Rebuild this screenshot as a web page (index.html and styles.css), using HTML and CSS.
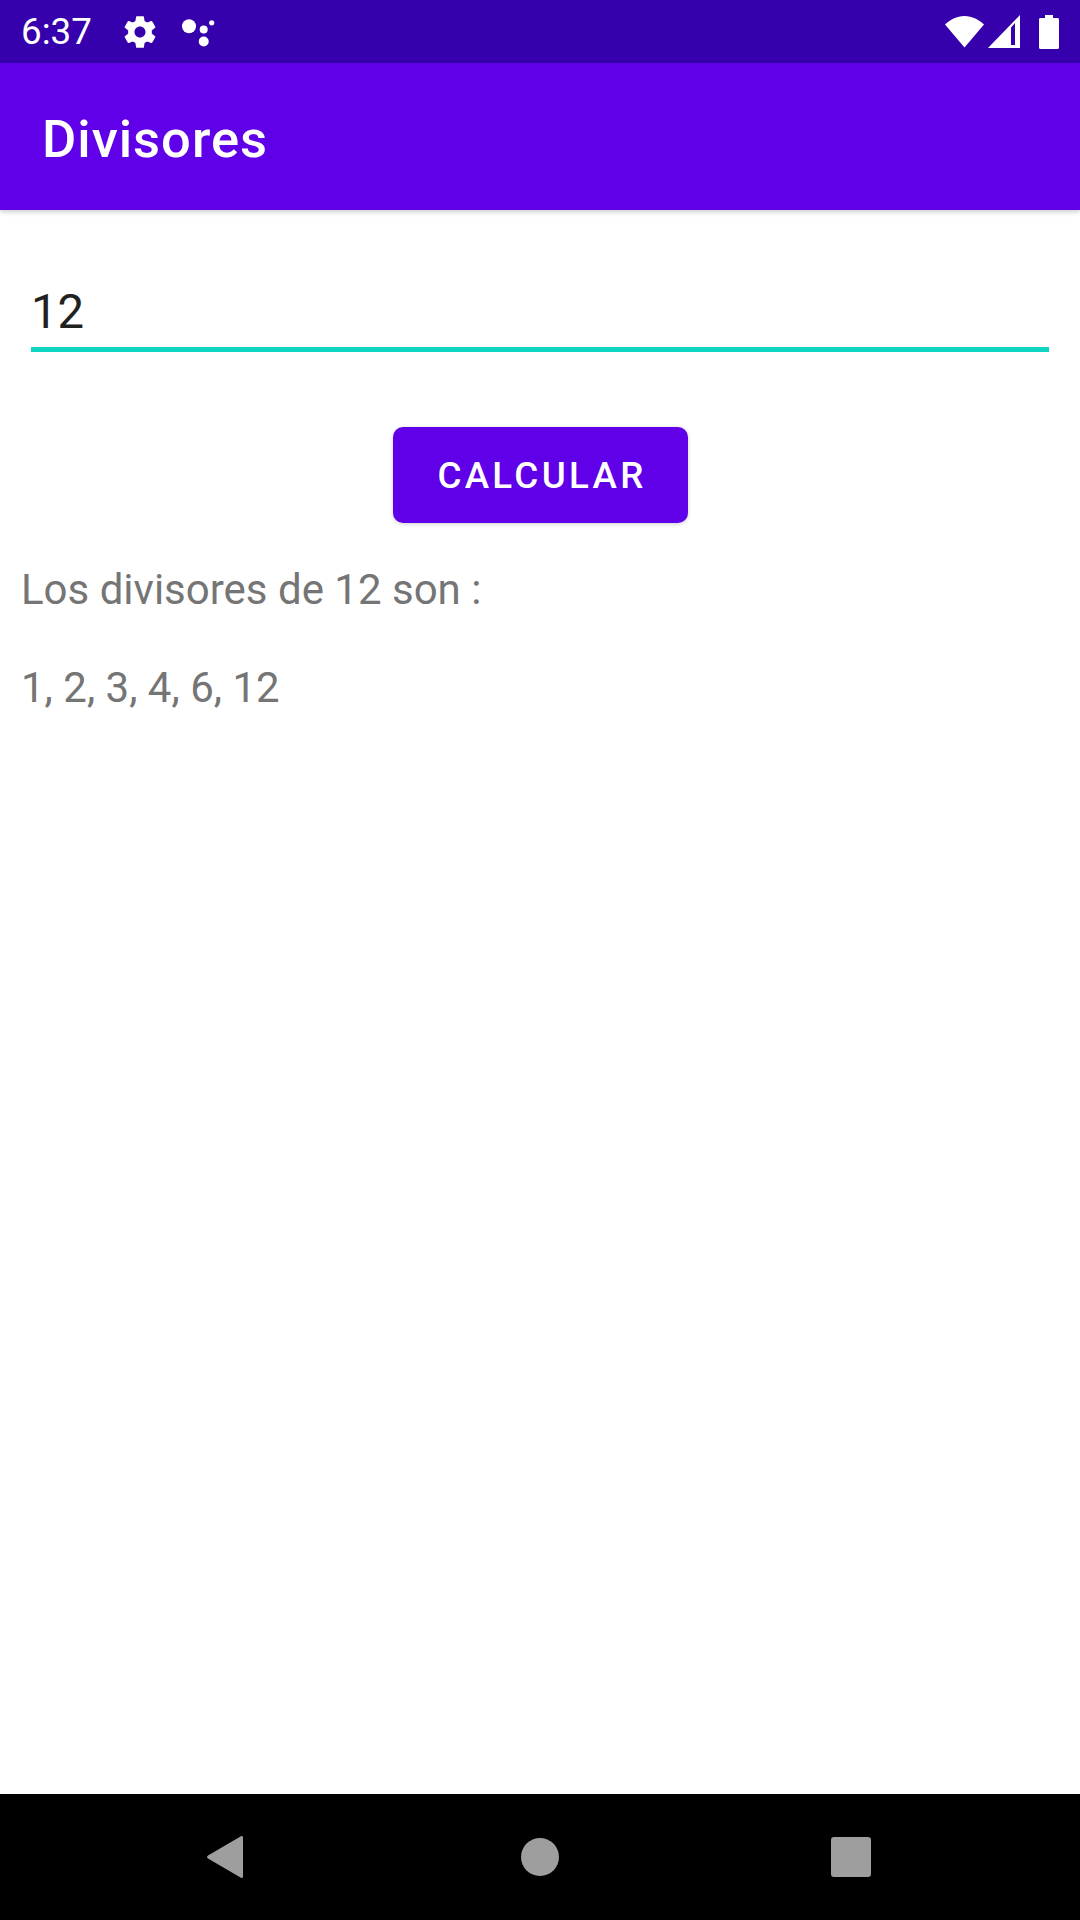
FILE: index.html
```html
<!DOCTYPE html>
<html lang="es">
<head>
    <meta charset="UTF-8">
    <meta name="viewport" content="width=device-width, initial-scale=1.0">
    <title>Divisores</title>
    <link rel="stylesheet" href="styles.css">
</head>
<body>

    <!-- Barra de estado -->
    <div class="status-bar">
        <span class="status-time">6:37</span>
        <svg class="icon-gear" viewBox="0 0 24 24" width="38" height="38">
            <path fill="#fff" fill-rule="evenodd" d="M19.43 12.98c.04-.32.07-.64.07-.98s-.03-.66-.07-.98l2.11-1.65c.19-.15.24-.42.12-.64l-2-3.46c-.12-.22-.39-.3-.61-.22l-2.49 1c-.52-.4-1.08-.73-1.69-.98l-.38-2.65C14.46 2.18 14.25 2 14 2h-4c-.25 0-.46.18-.49.42l-.38 2.65c-.61.25-1.17.59-1.69.98l-2.49-1c-.23-.09-.49 0-.61.22l-2 3.46c-.13.22-.07.49.12.64l2.11 1.65c-.04.32-.07.65-.07.98s.03.66.07.98l-2.11 1.65c-.19.15-.24.42-.12.64l2 3.46c.12.22.39.3.61.22l2.49-1c.52.4 1.08.73 1.69.98l.38 2.65c.03.24.24.42.49.42h4c.25 0 .46-.18.49-.42l.38-2.65c.61-.25 1.17-.59 1.69-.98l2.49 1c.23.09.49 0 .61-.22l2-3.46c.12-.22.07-.49-.12-.64l-2.11-1.65zM12 15.500c-1.930 0-3.500-1.570-3.500-3.500s1.570-3.500 3.500-3.500 3.500 1.570 3.500 3.500-1.570 3.500-3.500 3.500z"/>
        </svg>
        <svg class="icon-dots" viewBox="0 0 44 36" width="44" height="36">
            <circle cx="13" cy="12.200" r="7" fill="#fff"/>
            <circle cx="27.700" cy="15.500" r="4" fill="#fff"/>
            <circle cx="35.700" cy="8.800" r="2.600" fill="#fff"/>
            <circle cx="27.700" cy="27.500" r="5" fill="#fff"/>
        </svg>
        <div class="status-right">
            <svg viewBox="0 0 39 32" width="39" height="32">
                <path fill="#fff" d="M19.500 31.500 0 8.600C5 3.600 11.800 0 19.500 0S34 3.600 39 8.600z"/>
            </svg>
            <svg class="icon-signal" viewBox="0 0 32 33" width="32" height="33">
                <path fill="#fff" fill-rule="evenodd" d="M32 0v33H0zM27 8l-4 4.500V30h4z"/>
            </svg>
            <svg class="icon-battery" viewBox="0 0 20 34" width="20" height="34">
                <path fill="#fff" d="M6 0h8v3h4.500c.9 0 1.500.6 1.500 1.500V32.500c0 .9-.6 1.500-1.500 1.500H1.500C.6 34 0 33.400 0 32.500V4.500C0 3.600.6 3 1.500 3H6z"/>
            </svg>
        </div>
    </div>

    <!-- Barra de la app -->
    <header class="app-bar">
        <h1 class="app-title">Divisores</h1>
    </header>

    <main class="content">
        <div class="number-field">12</div>
        <div class="button-row">
            <button class="calc-button" type="button">CALCULAR</button>
        </div>
        <p class="result-text result-title">Los divisores de 12 son :</p>
        <p class="result-text result-list">1, 2, 3, 4, 6, 12</p>
    </main>

    <!-- Barra de navegacion -->
    <nav class="nav-bar">
        <svg viewBox="0 0 36 42" width="36" height="42">
            <path fill="#9e9e9e" d="M33.500 .4C34.800-.5 36 .2 36 1.800v38.400c0 1.600-1.200 2.300-2.500 1.400L1 22.600c-1.300-.9-1.300-2.300 0-3.200z"/>
        </svg>
        <div class="nav-circle"></div>
        <div class="nav-square"></div>
    </nav>

</body>
</html>
```

FILE: styles.css
```css
* {
    box-sizing: border-box;
}

body {
    margin: 0;
    width: 1080px;
    height: 1920px;
    display: flex;
    flex-direction: column;
    font-family: Roboto, "Liberation Sans", sans-serif;
    background-color: #fff;
    overflow: hidden;
}

/* Barra de estado */
.status-bar {
    height: 63px;
    background-color: #3600ac;
    color: #fff;
    display: flex;
    align-items: center;
    padding: 0 21px;
}

.status-time {
    font-size: 36.750px;
    width: 100px;
}

.icon-gear {
    margin-right: 17px;
}

.status-right {
    margin-left: auto;
    display: flex;
    align-items: center;
}

.icon-signal {
    margin-left: 4px;
}

.icon-battery {
    margin-left: 19px;
}

/* Barra de la app */
.app-bar {
    height: 147px;
    background-color: #5f00e8;
    display: flex;
    align-items: center;
    padding: 4px 0 0 42px;
    box-shadow: 0 2px 5px rgba(0, 0, 0, 0.2);
}

.app-title {
    margin: 0;
    color: #fff;
    font-size: 52.500px;
    font-weight: 500;
    letter-spacing: 1px;
}

/* Contenido */
.content {
    flex: 1;
    padding: 0 21px;
}

.number-field {
    margin: 74px 10px 0 10px;
    height: 68px;
    border-bottom: 5px solid #10d4c2;
    color: #212121;
    font-size: 47.250px;
    line-height: 56px;
}

.button-row {
    display: flex;
    justify-content: center;
    margin-top: 75px;
}

.calc-button {
    width: 295px;
    height: 96px;
    padding: 0 0 0 4px;
    border: none;
    border-radius: 10px;
    background-color: #5f00e8;
    color: #fff;
    font-family: inherit;
    font-size: 36.750px;
    font-weight: 500;
    letter-spacing: 3.300px;
    box-shadow: 0 1px 4px rgba(0, 0, 0, 0.2);
}

.result-text {
    margin: 0;
    color: #757575;
    font-size: 42px;
    line-height: 50px;
}

.result-title {
    margin-top: 42px;
}

.result-list {
    margin-top: 48px;
}

/* Barra de navegacion */
.nav-bar {
    height: 126px;
    background-color: #000;
    display: flex;
    align-items: center;
    padding-left: 207px;
}

.nav-circle {
    width: 38px;
    height: 38px;
    margin-left: 278px;
    border-radius: 50%;
    background-color: #9e9e9e;
}

.nav-square {
    width: 40px;
    height: 40px;
    margin-left: 272px;
    border-radius: 3px;
    background-color: #9e9e9e;
}
```
